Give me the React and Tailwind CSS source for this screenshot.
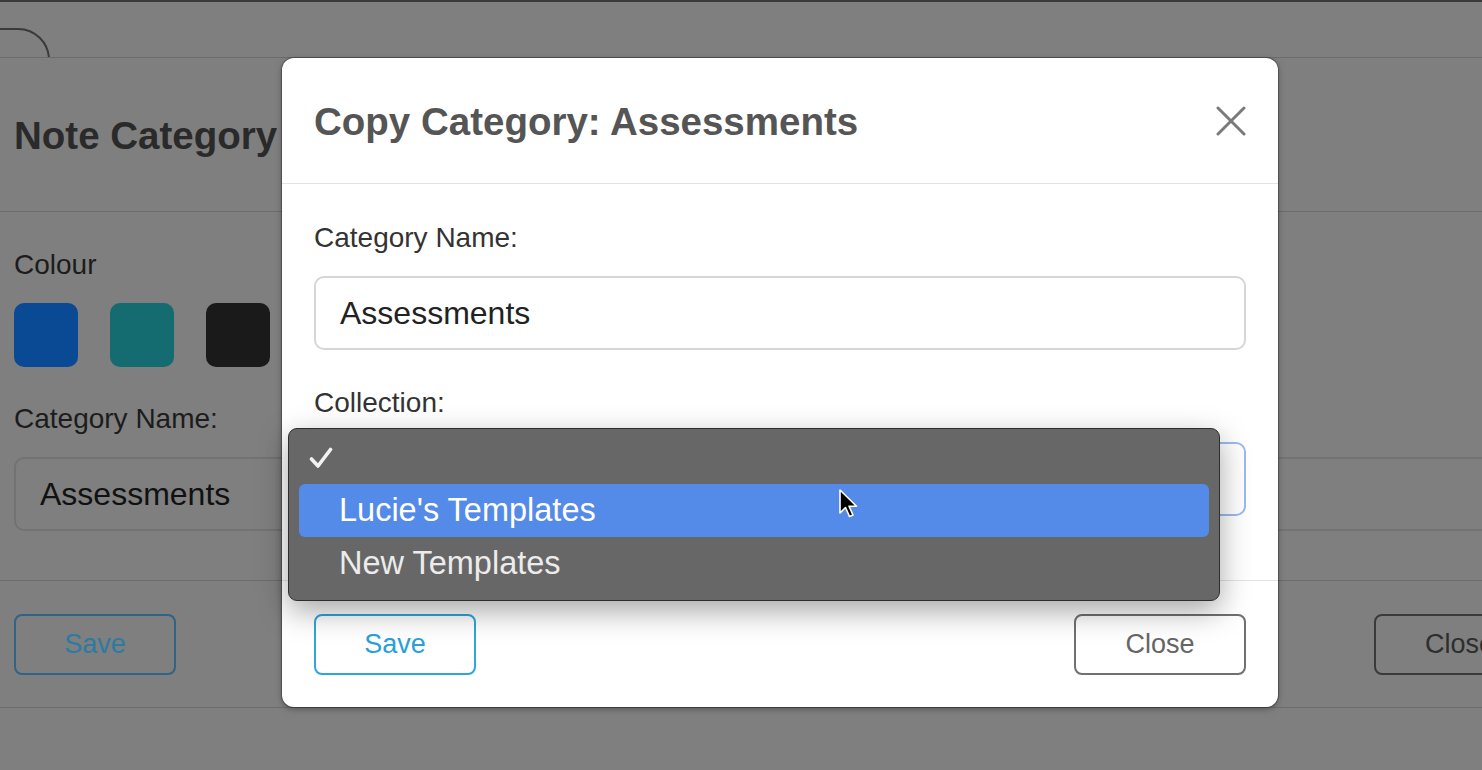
import React from "react";

function Cursor() {
  return (
    <svg width="22" height="32" viewBox="0 0 22 32" className="absolute left-[838px] top-[488px]">
      <path
        d="M2 2 L2 25 L7.5 19.5 L11.5 28.5 L15 27 L11 18.2 L18.5 18.2 Z"
        fill="#000"
        stroke="#fff"
        strokeWidth="1.6"
        strokeLinejoin="round"
      />
    </svg>
  );
}

export default function App() {
  return (
    <div className="relative w-[1482px] h-[770px] overflow-hidden bg-[#7f7f7f] font-['Liberation_Sans',Arial,Helvetica,sans-serif]">
      {/* top dark line */}
      <div className="h-[2px] bg-[#3a3a3a]" />
      {/* top strip with partially hidden element */}
      <div className="h-[55px] overflow-hidden">
        <div className="ml-[-40px] mt-[26px] w-[90px] h-[60px] rounded-tr-[32px] border-2 border-[#3a3a3a]" />
      </div>

      {/* background (dimmed) modal */}
      <div className="w-[1620px] border-t border-b border-[#6c6c6c]">
        <div className="h-[154px] flex items-center pl-[14px] pt-[4px] border-b border-[#6c6c6c]">
          <h2 className="text-[38.5px] font-bold text-[#2a2a2a] leading-none">Note Category</h2>
        </div>
        <div className="px-[14px] pt-[37px] pb-[49px] border-b border-[#6c6c6c]">
          <div className="text-[28px] leading-[32px] text-[#1c1c1c]">Colour</div>
          <div className="mt-[22px] flex gap-[32px]">
            <div className="w-[64px] h-[64px] rounded-[10px] bg-[#0a4a94]" />
            <div className="w-[64px] h-[64px] rounded-[10px] bg-[#146b70]" />
            <div className="w-[64px] h-[64px] rounded-[10px] bg-[#1a1a1a]" />
          </div>
          <div className="mt-[36px] text-[28px] leading-[32px] text-[#1c1c1c]">Category Name:</div>
          <div className="mt-[22px] h-[74px] w-[1560px] rounded-[10px] border-2 border-[#727272] flex items-center pl-[24px]">
            <span className="text-[32px] text-[#111]">Assessments</span>
          </div>
        </div>
        <div className="pt-[33px] pb-[32px] pl-[14px] flex items-center">
          <div className="w-[162px] h-[61px] rounded-[8px] border-2 border-[#2f6486] flex items-center justify-center text-[27px] text-[#2b7ba3]">
            Save
          </div>
          <div className="ml-[1198px] w-[171px] h-[61px] rounded-[8px] border-2 border-[#3a3a3a] flex items-center justify-center text-[27px] text-[#2e2e2e]">
            Close
          </div>
        </div>
      </div>

      {/* foreground modal */}
      <div className="absolute left-[282px] top-[58px] w-[996px] bg-white rounded-[12px] shadow-[0_0_0_1px_rgba(0,0,0,0.25),0_2px_6px_rgba(0,0,0,0.35)]">
        <div className="h-[126px] flex items-center justify-between px-[32px] border-b border-[#e3e3e3]">
          <h2 className="text-[38.5px] font-bold text-[#555] leading-none pt-[4px]">Copy Category: Assessments</h2>
          <svg width="30" height="30" viewBox="0 0 30 30">
            <path d="M2 2 L28 28 M28 2 L2 28" stroke="#7a7a7a" strokeWidth="3" strokeLinecap="round" />
          </svg>
        </div>
        <div className="px-[32px] pt-[38px] pb-[64px] border-b border-[#e3e3e3]">
          <div className="text-[28px] leading-[32px] text-[#333]">Category Name:</div>
          <div className="mt-[22px] h-[74px] rounded-[10px] border-2 border-[#d6d6d6] flex items-center pl-[24px]">
            <span className="text-[32px] text-[#222]">Assessments</span>
          </div>
          <div className="mt-[37px] text-[28px] leading-[32px] text-[#333]">Collection:</div>
          <div className="mt-[23px] h-[74px] rounded-[10px] border-2 border-[#9bbaf0]" />
        </div>
        <div className="px-[32px] pt-[33px] pb-[32px] flex items-center justify-between">
          <div className="w-[162px] h-[61px] rounded-[8px] border-2 border-[#2ea5de] flex items-center justify-center text-[27px] text-[#2a9fd8]">
            Save
          </div>
          <div className="w-[172px] h-[61px] rounded-[8px] border-2 border-[#707070] flex items-center justify-center text-[27px] text-[#666]">
            Close
          </div>
        </div>
      </div>

      {/* native select dropdown menu */}
      <div className="absolute left-[288px] top-[428px] w-[932px] rounded-[9px] bg-[#676767] border border-[#2e2e2e] pt-[2px] pb-[10px] shadow-[0_10px_30px_rgba(0,0,0,0.35)]">
        <div className="h-[53px] flex items-center pl-[20px]">
          <svg width="24" height="22" viewBox="0 0 24 22">
            <path d="M2.5 12 L9 19 L21.5 2.5" fill="none" stroke="#f2f2f2" strokeWidth="3.6" strokeLinecap="round" strokeLinejoin="round" />
          </svg>
        </div>
        <div className="mx-[10px] h-[53px] rounded-[6px] bg-[#548ae8] flex items-center pl-[40px]">
          <span className="text-[32.5px] text-white">Lucie's Templates</span>
        </div>
        <div className="mx-[10px] h-[53px] flex items-center pl-[40px]">
          <span className="text-[32.5px] text-[#ececec]">New Templates</span>
        </div>
      </div>

      <Cursor />
    </div>
  );
}
